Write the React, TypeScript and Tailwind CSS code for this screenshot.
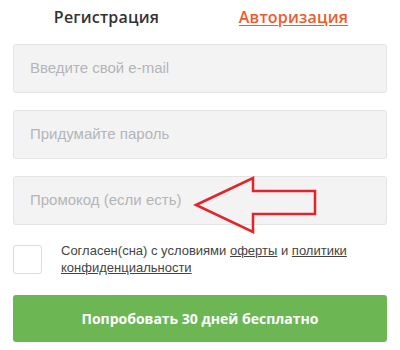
import React from "react";

export default function App() {
  return (
    <div className="relative w-[400px] h-[350px] bg-white overflow-hidden px-[13px]">
      <div className="grid grid-cols-2 h-[44px] items-start pt-[7px]">
        <div className="text-center text-[16px] font-semibold text-[#333] leading-[20px] tracking-[0.2px]" style={{ fontFamily: '"Open Sans", sans-serif' }}>
          Регистрация
        </div>
        <div className="text-center text-[16px] font-semibold text-[#f15a2e] leading-[20px] tracking-[0.2px] underline underline-offset-2" style={{ fontFamily: '"Open Sans", sans-serif' }}>
          Авторизация
        </div>
      </div>
      <div className="flex flex-col gap-[17px]" style={{ fontFamily: '"Liberation Sans", Arial, sans-serif' }}>
        <div className="h-[49px] rounded-[3px] border border-[#e4e4e4] bg-[#f3f3f3] flex items-center pl-4 text-[15px] text-[#b3b5b9]">
          Введите свой e-mail
        </div>
        <div className="h-[49px] rounded-[3px] border border-[#e4e4e4] bg-[#f3f3f3] flex items-center pl-4 text-[15px] text-[#b3b5b9]">
          Придумайте пароль
        </div>
        <div className="h-[49px] rounded-[3px] border border-[#e4e4e4] bg-[#f3f3f3] flex items-center pl-4 text-[15px] text-[#b3b5b9]">
          Промокод (если есть)
        </div>
      </div>
      <div className="flex items-start mt-[20px]" style={{ fontFamily: '"Liberation Sans", Arial, sans-serif' }}>
        <div className="w-[29px] h-[29px] shrink-0 rounded-[3px] border border-[#dcdcdc] bg-white" />
        <div className="ml-[19px] -mt-[3px] text-[13px] leading-[17px] text-[#444]">
          Согласен(сна) с условиями <span className="underline">оферты</span> и{" "}
          <span className="underline">политики</span>
          <br />
          <span className="underline">конфиденциальности</span>
        </div>
      </div>
      <div className="mt-[19px] h-[47px] rounded-[3px] bg-[#6cb754] flex items-center justify-center text-white text-[14px] font-bold" style={{ fontFamily: '"Open Sans", sans-serif' }}>
        Попробовать 30 дней бесплатно
      </div>
      <svg className="absolute left-0 top-0 pointer-events-none" width="400" height="350" viewBox="0 0 400 350">
        <polygon
          points="196,205 253,178 253,191 315,191 315,214 253,214 253,232"
          fill="none"
          stroke="#e3242b"
          strokeWidth="2.5"
          strokeLinejoin="miter"
        />
      </svg>
    </div>
  );
}
